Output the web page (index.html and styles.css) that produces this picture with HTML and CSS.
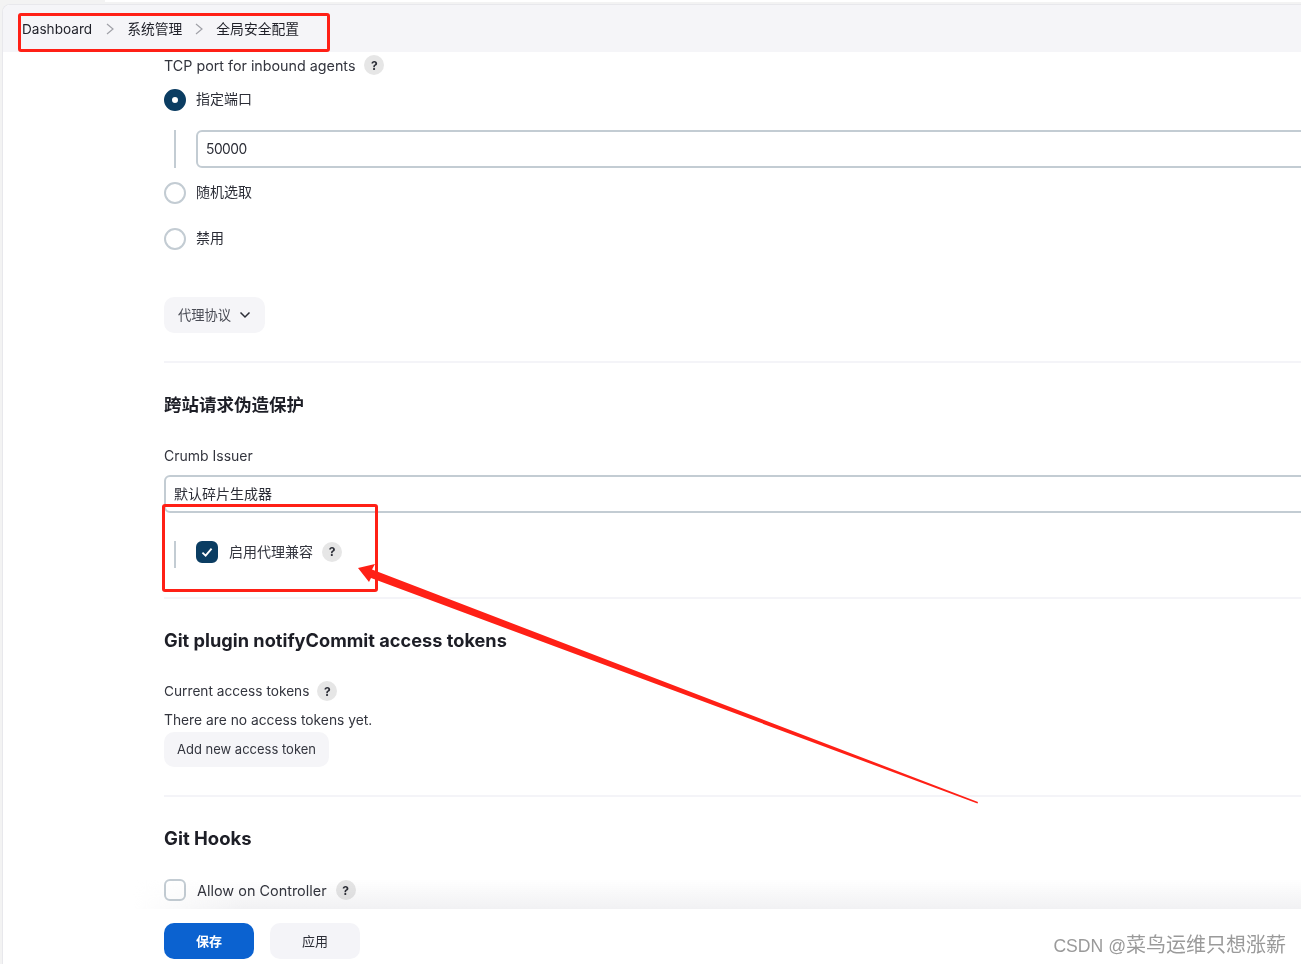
FILE: index.html
```html
<!DOCTYPE html>
<html lang="zh-CN">
<head>
<meta charset="utf-8">
<title>全局安全配置</title>
<link rel="stylesheet" href="styles.css">
</head>
<body>
<div class="page">
  <div class="topline"></div>
  <div class="frame">
    <nav class="crumbs">
      <span class="crumb">Dashboard</span>
      <svg class="sep" viewBox="0 0 10 14"><path d="M2 2 8 7 2 12"/></svg>
      <span class="crumb">系统管理</span>
      <svg class="sep" viewBox="0 0 10 14"><path d="M2 2 8 7 2 12"/></svg>
      <span class="crumb">全局安全配置</span>
    </nav>
    <main class="main">
      <div class="row label-row tcp"><span>TCP port for inbound agents</span><span class="help">?</span></div>
      <div class="row radio-row first"><span class="radio on"></span><span class="cjk">指定端口</span></div>
      <div class="nested port"><input class="input" value="50000"></div>
      <div class="row radio-row second"><span class="radio"></span><span class="cjk">随机选取</span></div>
      <div class="row radio-row third"><span class="radio"></span><span class="cjk">禁用</span></div>
      <button class="btn drop"><span class="cjk">代理协议</span>
        <svg class="chev" viewBox="0 0 12 8"><path d="M1.500 1.500 6 6l4.500-4.500"/></svg>
      </button>
      <hr class="rule r1">
      <h2 class="title t1">跨站请求伪造保护</h2>
      <div class="field-label">Crumb Issuer</div>
      <div class="select">默认碎片生成器</div>
      <div class="nested proxy">
        <span class="check on"><svg viewBox="0 0 14 14"><path d="M3 7.500 5.800 10.200 11 4"/></svg></span>
        <span>启用代理兼容</span><span class="help">?</span>
      </div>
      <hr class="rule r2">
      <h2 class="title t2">Git plugin notifyCommit access tokens</h2>
      <div class="row label-row tokens"><span>Current access tokens</span><span class="help">?</span></div>
      <div class="none">There are no access tokens yet.</div>
      <button class="btn add"><span class="cjk">Add new access token</span></button>
      <hr class="rule r3">
      <h2 class="title t3">Git Hooks</h2>
      <div class="row allow"><span class="check"></span><span>Allow on Controller</span><span class="help">?</span></div>
    </main>
  </div>
  <footer class="bar">
    <button class="btn save"><span class="cjk">保存</span></button>
    <button class="btn apply"><span class="cjk">应用</span></button>
  </footer>
  <div class="mark"><span class="mark-latin">CSDN @</span>菜鸟运维只想涨薪</div>
  <div class="box box-a"></div>
  <div class="box box-b"></div>
  <svg class="arrow" viewBox="0 0 1301 964"><polygon points="358,568 375,564 372,569.500 978,802 977.500,803.500 371,578 369,582"/></svg>
</div>
</body>
</html>
```
FILE: styles.css
```css
* { box-sizing: border-box; }
html, body { margin: 0; padding: 0; background: #fff; }
body {
  font-family: Inter, "Noto Sans CJK SC", sans-serif;
  font-size: 14px;
  color: #2b2d36;
}
.page { position: relative; width: 1301px; height: 964px; overflow: hidden; background: #f3f3f3; }
.topline { height: 4px; margin-left: 105px; border-top: 2px solid #fff; }
.frame {
  height: 960px; margin-left: 2px; background: #fff;
  border-top: 1px solid #e8e8ec; border-left: 1px solid #e8e8ec; border-top-left-radius: 8px;
  overflow: hidden;
}
.crumbs {
  display: flex; align-items: center;
  height: 47px; padding: 0 0 0 19px;
  background: #f5f5f8;
  color: #1f2028; font-size: 13.800px; line-height: 20px;
}
.crumb:first-child { font-size: 13.600px; }
.sep { width: 10px; height: 14px; fill: none; stroke: #a0a1a8; stroke-width: 1.200; }
.crumbs .sep:nth-child(2) { margin: 0 12px 0 13px; }
.crumbs .sep:nth-child(4) { margin: 0 12px 0 12px; }
.main { padding: 3px 0 0 161px; }
.row { display: flex; align-items: center; }
.cjk { padding-bottom: 2px; }
.radio-row .cjk { padding-bottom: 4px; }
.label-row { height: 20px; color: #33353e; }
.tcp { font-size: 14.300px; }
.help {
  display: inline-flex; align-items: center; justify-content: center;
  width: 20px; height: 20px; border-radius: 50%;
  background: #e6e6e6; color: #2b2d36; font-size: 12px; font-weight: 700;
  margin-left: 9px;
}
.radio-row { height: 22px; gap: 10px; }
.first { margin-top: 14px; }
.second { margin-top: 14px; }
.third { margin-top: 24px; }
.radio { width: 22px; height: 22px; border-radius: 50%; border: 2px solid #c3ccd3; background: #fff; }
.radio.on { border: 8.500px solid #0b3d62; }
.nested { margin-left: 10px; border-left: 2px solid #c3ccd3; padding-left: 20px; }
.port { margin-top: 19px; height: 38px; }
.input {
  display: block; width: 1200px; height: 38px; padding: 0 8px;
  border: 2px solid #c3ccd3; border-radius: 6px;
  font: 13.800px Inter, "Noto Sans CJK SC", sans-serif; letter-spacing: -0.500px; color: #2b2d36; background: #fff;
}
.btn {
  display: inline-flex; align-items: center; justify-content: center;
  border: 0; border-radius: 10px; background: #f5f5f8; color: #2b2d36;
  font-family: Inter, "Noto Sans CJK SC", sans-serif; font-size: 14px; padding: 0;
}
.drop { display: flex; width: 101px; height: 36px; margin-top: 47px; gap: 8px; color: #4a4c55; font-size: 13.300px; }
.chev { width: 12px; height: 8px; fill: none; stroke: #2b2d36; stroke-width: 1.500; }
.rule { height: 2px; margin: 0; border: 0; background: #f4f4f8; }
.r1 { margin-top: 28px; }
.title { margin: 0; font-size: 18.200px; font-weight: 700; line-height: 24px; color: #1d1e26; }
.t1 { margin-top: 30px; font-size: 17.500px; }
.field-label { margin-top: 29px; font-size: 14px; line-height: 20px; color: #33353e; }
.select {
  width: 1200px; height: 38px; margin-top: 9px; padding: 5px 8px 0;
  border: 2px solid #c3ccd3; border-radius: 6px; line-height: 24px; font-size: 14px;
}
.proxy { display: flex; align-items: flex-start; height: 27px; margin-top: 28px; font-size: 14px; color: #33353e; line-height: 22px; }
.proxy .help { margin-top: 1px; }
.check {
  display: inline-flex; align-items: center; justify-content: center;
  width: 22px; height: 22px; border-radius: 6px; border: 2px solid #c3ccd3; background: #fff; flex: none;
}
.check.on { background: #0b3d62; border-color: #0b3d62; }
.check svg { width: 16px; height: 16px; fill: none; stroke: #fff; stroke-width: 1.600; }
.proxy .check { margin-right: 11px; }
.r2 { margin-top: 29px; }
.t2 { margin-top: 29px; }
.tokens { margin-top: 29px; font-size: 13.700px; }
.tokens .help { margin-left: 8px; }
.none { margin-top: 9px; font-size: 13.800px; line-height: 20px; color: #33353e; }
.add { display: flex; width: 165px; height: 35px; margin-top: 2px; font-size: 13px; color: #33353e; }
.r3 { margin-top: 28px; }
.t3 { margin-top: 29px; font-size: 18.500px; }
.allow { height: 22px; margin-top: 29px; font-size: 14.450px; color: #33353e; }
.allow .check { margin-right: 11px; }
.bar {
  position: absolute; left: 3px; right: 0; top: 909px; height: 55px;
  display: flex; gap: 16px; align-items: flex-start; padding: 14px 0 0 161px; background: #fff;
}
.bar::before {
  content: ""; position: absolute; left: 0; right: 0; top: -30px; height: 30px;
  background: linear-gradient(to bottom, rgba(243,243,245,0), #f1f1f3);
  mix-blend-mode: multiply;
  -webkit-mask-image: linear-gradient(to right, transparent 130px, #000 240px);
  mask-image: linear-gradient(to right, transparent 130px, #000 240px);
}
.save, .apply { width: 90px; height: 36px; font-size: 13px; }
.save { background: #0b62d0; color: #fff; font-weight: 700; }
.apply { background: #f4f4f8; }
.mark {
  position: absolute; right: 15px; top: 931px;
  font-size: 20px; line-height: 28px; color: #9a9a9a;
  font-family: "Liberation Sans", "Noto Sans CJK SC", sans-serif;
}
.mark-latin { font-size: 17.600px; }
.box { position: absolute; border: 3px solid #ff2016; border-radius: 3px; }
.box-a { left: 18px; top: 13px; width: 312px; height: 39px; }
.box-b { left: 162px; top: 504px; width: 216px; height: 88px; }
.arrow { position: absolute; left: 0; top: 0; width: 1301px; height: 964px; fill: #ff2016; pointer-events: none; }
```
